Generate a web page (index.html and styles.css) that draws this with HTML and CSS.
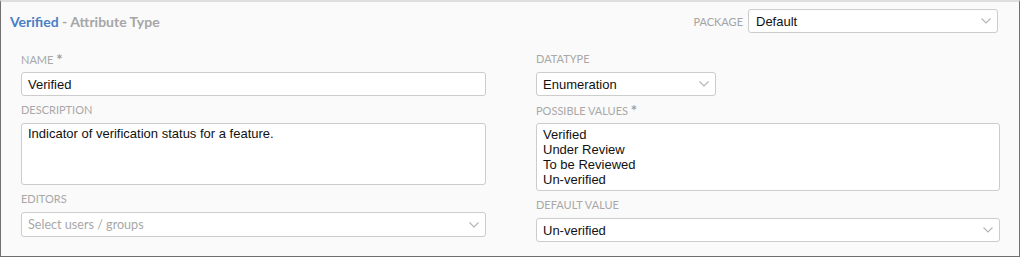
FILE: index.html
```html
<!DOCTYPE html>
<html>
<head>
<meta charset="utf-8">
<link rel="stylesheet" href="styles.css">
</head>
<body>
<div class="panel">
  <div class="header">
    <div class="title"><span class="title-name">Verified</span> - Attribute Type</div>
    <div class="pkg">
      <span class="pkg-label">PACKAGE</span>
      <div class="control select pkg-select">
        <span>Default</span>
        <svg class="chev" width="10" height="6" viewBox="0 0 10 6"><path d="M0.5 0.5 L5 5 L9.5 0.5" fill="none" stroke="#b4b4b4" stroke-width="1.1"/></svg>
      </div>
    </div>
  </div>
  <div class="body">
    <div class="col">
      <div class="field">
        <div class="label">NAME <span class="req">*</span></div>
        <div class="control input">Verified</div>
      </div>
      <div class="field">
        <div class="label">DESCRIPTION</div>
        <div class="control textarea desc">Indicator of verification status for a feature.</div>
      </div>
      <div class="field">
        <div class="label">EDITORS</div>
        <div class="control select editors">
          <span class="placeholder">Select users / groups</span>
          <svg class="chev" width="10" height="6" viewBox="0 0 10 6"><path d="M0.5 0.5 L5 5 L9.5 0.5" fill="none" stroke="#b4b4b4" stroke-width="1.1"/></svg>
        </div>
      </div>
    </div>
    <div class="col">
      <div class="field">
        <div class="label">DATATYPE</div>
        <div class="control select datatype">
          <span>Enumeration</span>
          <svg class="chev" width="10" height="6" viewBox="0 0 10 6"><path d="M0.5 0.5 L5 5 L9.5 0.5" fill="none" stroke="#b4b4b4" stroke-width="1.1"/></svg>
        </div>
      </div>
      <div class="field">
        <div class="label">POSSIBLE VALUES <span class="req">*</span></div>
        <div class="control textarea values">Verified<br>Under Review<br>To be Reviewed<br>Un-verified</div>
      </div>
      <div class="field">
        <div class="label">DEFAULT VALUE</div>
        <div class="control select">
          <span>Un-verified</span>
          <svg class="chev" width="10" height="6" viewBox="0 0 10 6"><path d="M0.5 0.5 L5 5 L9.5 0.5" fill="none" stroke="#b4b4b4" stroke-width="1.1"/></svg>
        </div>
      </div>
    </div>
  </div>
</div>
</body>
</html>
```
FILE: styles.css
```css
html, body {
  margin: 0;
  padding: 0;
  background: #ffffff;
}

.panel {
  box-sizing: border-box;
  width: 1020px;
  height: 257px;
  background: #fafafa;
  border-top: 2px solid #dedede;
  border-left: 1px solid #6f6f6f;
  border-right: 1px solid #6f6f6f;
  border-bottom: 1px solid #6f6f6f;
  font-family: Lato, "Noto Sans", sans-serif;
}

.header {
  display: flex;
  justify-content: space-between;
  align-items: center;
  padding: 7px 21px 0 9px;
}

.title {
  font-family: Lato, sans-serif;
  font-weight: bold;
  font-size: 14px;
  color: #a6a6a6;
}

.title-name {
  color: #4a7ec6;
}

.pkg {
  display: flex;
  align-items: center;
  gap: 5px;
}

.pkg-label {
  font-size: 11px;
  color: #a4a4a4;
}

.control {
  box-sizing: border-box;
  background: #ffffff;
  border: 1px solid #cccccc;
  border-radius: 3px;
  font-family: "Liberation Sans", Arial, sans-serif;
  font-size: 13px;
  color: #111111;
  padding: 0 6px;
}

.input, .select {
  height: 24px;
  display: flex;
  align-items: center;
}

.select {
  justify-content: space-between;
}

.chev {
  display: block;
  flex: none;
}

.pkg-select {
  width: 250px;
  padding-left: 7px;
}

.body {
  display: grid;
  grid-template-columns: 465px 464px;
  column-gap: 50px;
  padding-left: 20px;
  margin-top: 18px;
}

.field + .field {
  margin-top: 6px;
}

.label {
  font-size: 11px;
  line-height: 16px;
  height: 16px;
  color: #a8a8a8;
  margin-bottom: 5px;
}

.req {
  font-size: 15px;
  font-weight: bold;
  color: #a0a0a0;
  vertical-align: -1px;
}

.textarea {
  line-height: 15px;
}

.desc {
  height: 62px;
  padding-top: 2px;
}

.values {
  height: 68px;
  padding-top: 3px;
}

.editors {
  height: 25px;
}

.placeholder {
  font-family: Lato, sans-serif;
  font-size: 12.6px;
  color: #a8a8a8;
}

.datatype {
  width: 180px;
}
```
